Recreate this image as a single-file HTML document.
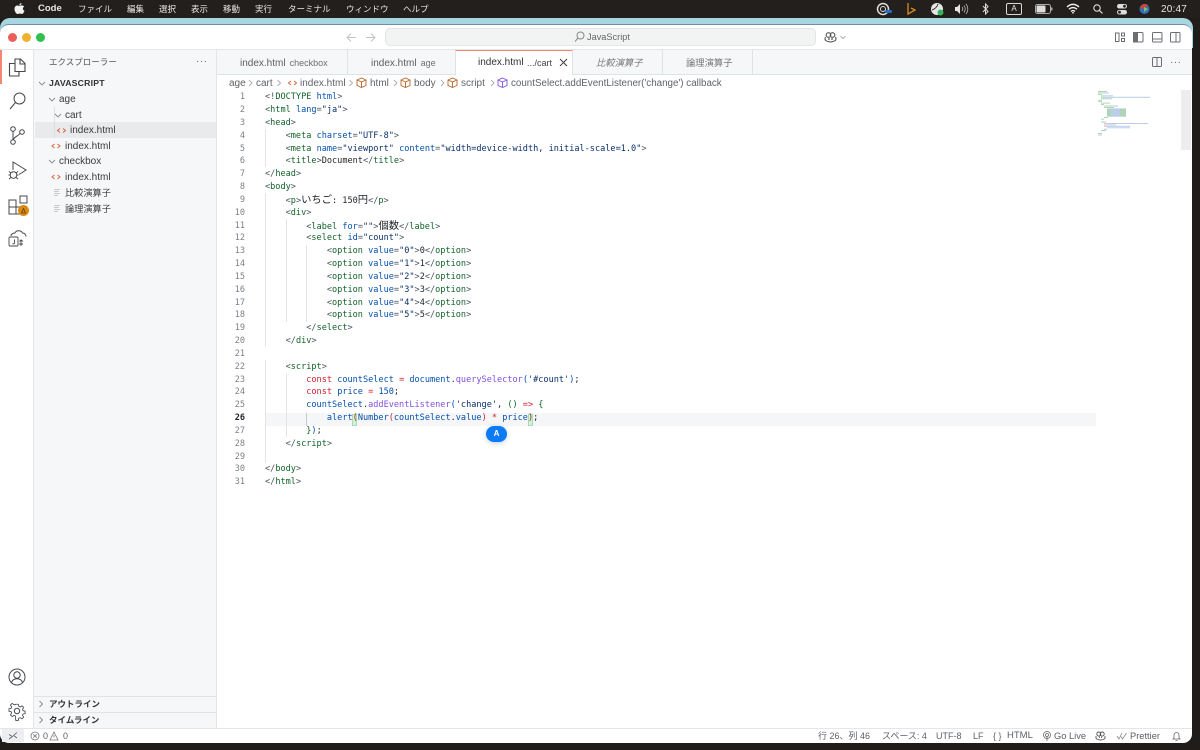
<!DOCTYPE html>
<html lang="ja"><head><meta charset="utf-8"><title>VS Code</title>
<style>
*{box-sizing:border-box}
html,body{margin:0;padding:0;width:1200px;height:750px;overflow:hidden;background:#1f1c1a}
body{position:relative;font-family:"Liberation Sans","Noto Sans CJK JP",sans-serif;color:#3b3b3b}
.a{position:absolute;white-space:pre}
.m{top:2px;height:14px;line-height:14px;color:#e9e7e4;font-size:8.5px}
.s{font-size:10px;line-height:14px;height:14px}
.t{top:56px;font-size:10px;line-height:14px;color:#5e5e5e}
.t small{font-size:9px;color:#6e6e6e;margin-left:4px}
.bc{top:77px;font-size:10px;line-height:13px;color:#5f6368}
.st{top:729px;font-size:9px;line-height:14px;color:#5c6166}
svg{position:absolute;overflow:visible}
#code,#nums{position:absolute;left:0;top:.8px}
#code div{position:absolute;left:265px;height:12.83px;line-height:12.83px;font-family:"DejaVu Sans Mono","Liberation Mono",monospace;font-size:8.57px;white-space:pre;color:#1f2328}
#nums div{position:absolute;left:225px;width:20px;text-align:right;height:12.83px;line-height:12.83px;font-family:"DejaVu Sans Mono","Liberation Mono",monospace;font-size:8.57px;color:#7a828a}
i{font-style:normal}
.g{color:#116329}.p{color:#4a5560}.b{color:#0550ae}.n{color:#0a3069}.k{color:#cf222e}.f{color:#8250df}.j{font-size:10.3px;font-family:"Noto Sans CJK JP",sans-serif;line-height:10px}
.gl{position:absolute;width:1px;background:#e2e4e7}
</style></head><body>
<div class="a" style="left:0;top:18px;width:1193px;height:30px;background:#a8d5e2;border-radius:10px 10px 0 0"></div>
<div class="a" style="left:0;top:24px;width:1192px;height:719px;background:#fff;border-radius:9px;border-top:1px solid #6f8f9b"></div>

<div class="a" style="left:0;top:0;width:1200px;height:18px;background:#221f1c"></div>
<svg style="left:14px;top:3px" width="11" height="12" viewBox="0 0 11 12"><path fill="#f2f2f2" d="M7.500 0c.1 1-.9 2.400-2.200 2.400C5.200 1.200 6.400.1 7.500 0zM5.400 3c.6 0 1.300-.6 2.400-.6.900 0 1.800.5 2.300 1.200-1.800 1-1.500 3.500.4 4.300-.5 1.300-1.500 3.100-2.600 3.100-.8 0-1.100-.5-2.100-.5s-1.400.5-2.100.5C2.300 11 .5 8.500.5 6c0-2.200 1.400-3.500 2.800-3.500.9 0 1.600.5 2.100.5z"/></svg>
<div class="a m" style="left:38px;font-weight:bold;font-size:9.5px">Code</div>
<div class="a m" style="left:78px">ファイル</div><div class="a m" style="left:127px">編集</div><div class="a m" style="left:159px">選択</div><div class="a m" style="left:191px">表示</div><div class="a m" style="left:223px">移動</div><div class="a m" style="left:255px">実行</div><div class="a m" style="left:288px">ターミナル</div><div class="a m" style="left:346px">ウィンドウ</div><div class="a m" style="left:403px">ヘルプ</div>

<!-- menu extras -->
<svg style="left:875px;top:2px" width="18" height="14" viewBox="0 0 18 14"><circle cx="8" cy="7" r="5.500" fill="none" stroke="#ddd" stroke-width="1.500"/><circle cx="8" cy="7" r="2.500" fill="none" stroke="#ddd"/><rect x="10" y="8" width="7" height="3" rx="1.500" fill="#1f6fd0"/></svg>
<svg style="left:906px;top:2px" width="10" height="14" viewBox="0 0 10 14"><path d="M2 1v11l7-4-4-2" fill="none" stroke="#d98a1f" stroke-width="1.300"/></svg>
<svg style="left:930px;top:2px" width="14" height="14" viewBox="0 0 14 14"><circle cx="7" cy="7" r="6" fill="#e6e6e6"/><path d="M2 8c3-1 5-3 6-6" stroke="#333" fill="none"/><circle cx="10.500" cy="10.500" r="3" fill="#32b45a"/></svg>
<svg style="left:954px;top:3px" width="15" height="12" viewBox="0 0 15 12"><path d="M1 4h2l3-3v10L3 8H1z" fill="#e5e5e5"/><path d="M8 4c1 1 1 3 0 4M10 2.500c1.600 2 1.600 5 0 7M12 1c2.400 3 2.400 7 0 10" stroke="#bbb" fill="none" stroke-width=".8"/></svg>
<svg style="left:982px;top:3px" width="7" height="12" viewBox="0 0 7 12"><path d="M1 3l5 5.500L3.500 11V1L6 3.500 1 9" fill="none" stroke="#ddd"/></svg>
<div class="a" style="left:1006px;top:2.500px;width:16px;height:12px;border:1px solid #d8d8d8;border-radius:2px;color:#e8e8e8;font-size:8px;line-height:10px;text-align:center">A</div>
<svg style="left:1035px;top:4px" width="18" height="10" viewBox="0 0 18 10"><rect x=".5" y=".5" width="15" height="9" rx="2" fill="none" stroke="#aaa"/><rect x="1.500" y="1.500" width="9" height="7" rx="1" fill="#ddd"/><rect x="16" y="3.500" width="1.500" height="3" fill="#aaa"/></svg>
<svg style="left:1066px;top:3px" width="14" height="11" viewBox="0 0 14 11"><path d="M1 4c3.500-3.500 8.500-3.500 12 0M3 6.300c2.400-2.300 5.600-2.300 8 0M5 8.400c1.200-1 2.800-1 4 0" fill="none" stroke="#eee" stroke-width="1.400"/><circle cx="7" cy="9.800" r=".9" fill="#eee"/></svg>
<svg style="left:1093px;top:4px" width="10" height="10" viewBox="0 0 10 10"><circle cx="4" cy="4" r="3.200" fill="none" stroke="#ddd" stroke-width="1.100"/><path d="M6.400 6.400L9.500 9.500" stroke="#ddd" stroke-width="1.200"/></svg>
<svg style="left:1116px;top:3px" width="12" height="12" viewBox="0 0 12 12"><rect x="1" y="1" width="10" height="4.500" rx="2.200" fill="#ddd"/><rect x="1" y="7" width="10" height="4.500" rx="2.200" fill="#ddd"/><circle cx="8.500" cy="3.200" r="1.400" fill="#222"/><circle cx="3.500" cy="9.200" r="1.400" fill="#222"/></svg>
<svg style="left:1139px;top:3px" width="11" height="12" viewBox="0 0 11 12"><circle cx="5.500" cy="6" r="5" fill="#2f6fb5"/><path d="M1 5a5 5 0 0 1 8-3L6 6z" fill="#c9463d"/><path d="M5 4l4 2-4 3z" fill="#7cc06a"/></svg>
<div class="a m" style="left:1161px;top:3px;font-size:10px;letter-spacing:.2px">20:47</div>

<!-- title bar -->
<div class="a" style="left:8px;top:33px;width:9px;height:9px;border-radius:50%;background:#ed5f59"></div>
<div class="a" style="left:22px;top:33px;width:9px;height:9px;border-radius:50%;background:#f0b22e"></div>
<div class="a" style="left:36px;top:33px;width:9px;height:9px;border-radius:50%;background:#2fc050"></div>
<svg style="left:346px;top:32px" width="30" height="11" viewBox="0 0 30 11" fill="none" stroke="#c0c3c7"><path d="M10 5.500H1M5 1.500l-4 4 4 4M20 5.500h9M25 1.500l4 4-4 4"/></svg>
<div class="a" style="left:385px;top:28px;width:431px;height:18px;background:#f2f3f3;border:1px solid #e3e4e5;border-radius:5px"></div>
<svg style="left:574px;top:31px" width="11" height="11" viewBox="0 0 11 11" fill="none" stroke="#888"><circle cx="6.500" cy="4.500" r="3.500"/><path d="M4 7L1 10.500"/></svg>
<div class="a" style="left:587px;top:30px;font-size:9.200px;line-height:14px;color:#666">JavaScript</div>
<svg style="left:824px;top:32px" width="23" height="11" viewBox="0 0 23 11" fill="none" stroke="#555" stroke-width="1.100"><circle cx="4.500" cy="3" r="2.300"/><circle cx="8.500" cy="3" r="2.300"/><path d="M1.500 5c-.7 1.500-.5 3 .5 3.700 2.800 1.500 6.200 1.500 9 0 1-.7 1.200-2.200.5-3.700"/><path d="M5 6v2M8 6v2" stroke-width="1.200"/><path d="M16.500 4l2.500 2.500L21.500 4" stroke="#999" stroke-width=".8"/></svg>
<svg style="left:1115px;top:32px" width="66" height="11" viewBox="0 0 66 11" fill="none" stroke="#6b6f74">
<rect x=".5" y="1" width="3.500" height="8.500"/><rect x="6.500" y="1" width="3" height="3"/><rect x="6.500" y="6.500" width="3" height="3"/>
<rect x="18.500" y=".5" width="9.500" height="9.500" rx="1"/><rect x="18.500" y=".5" width="4" height="9.500" fill="#6b6f74"/>
<rect x="37.500" y=".5" width="9.500" height="9.500" rx="1"/><path d="M37.500 7h9.500"/>
<rect x="55.500" y=".5" width="9.500" height="9.500" rx="1"/><path d="M61 .5v9.500"/></svg>

<!-- borders -->
<div class="a" style="left:0;top:49px;width:1192px;height:1px;background:#e3e5e8"></div>

<!-- activity bar -->
<div class="a" style="left:0;top:50px;width:2px;height:34px;background:#f28772"></div>
<div class="a" style="left:33px;top:50px;width:1px;height:678px;background:#e3e5e8"></div>
<svg style="left:8px;top:58px" width="18" height="19" viewBox="0 0 18 19" fill="none" stroke="#44484c" stroke-width="1.100"><path d="M7 1h5.500L17 5.500V13.500H7z" fill="#fff"/><path d="M12 1v5h5"/><path d="M7 5.500H1.500V18H11V13.500"/></svg>
<svg style="left:9px;top:92px" width="17" height="18" viewBox="0 0 17 18" fill="none" stroke="#44484c" stroke-width="1"><circle cx="10.500" cy="6.500" r="5.500"/><path d="M6.500 10.500L1 17"/></svg>
<svg style="left:9px;top:126px" width="16" height="19" viewBox="0 0 16 19" fill="none" stroke="#44484c" stroke-width="1"><circle cx="4" cy="3" r="2.300"/><circle cx="4" cy="16" r="2.300"/><circle cx="13" cy="6" r="2.300"/><path d="M4 5.300v8.400M11 7c-1 3-5 3-6.800 6.500"/></svg>
<svg style="left:8px;top:161px" width="19" height="19" viewBox="0 0 19 19" fill="none" stroke="#44484c" stroke-width="1"><path d="M5 9V1l13 8-7 4.500"/><circle cx="5.500" cy="14" r="3.300"/><path d="M1 10.500l2 1.500M10 10.500l-2 1.500M.5 14h2M8.500 14h2M1 18l2-1.500M10 18l-2-1.500"/></svg>
<svg style="left:8px;top:195px" width="21" height="21" viewBox="0 0 21 21" fill="none" stroke="#44484c" stroke-width="1"><rect x="1" y="5" width="7" height="7"/><rect x="1" y="12" width="7" height="7"/><rect x="8" y="12" width="7" height="7"/><rect x="12" y="1" width="7" height="7"/><circle cx="15.500" cy="15.500" r="5.500" fill="#d88a14" stroke="none"/><path d="M13.500 18l2-4.500 2 4.500z" stroke="#6b3f05" stroke-width=".8"/></svg>
<svg style="left:8px;top:229px" width="19" height="19" viewBox="0 0 19 19" fill="none" stroke="#44484c" stroke-width=".9"><path d="M3 7C3 4.500 6 4 7 4c1-3 6-3 7.500 0 2 0 3.500 1.500 3.500 3.500"/><rect x="1" y="8" width="9" height="9" rx="1"/><path d="M6.500 10.500V14c0 1-1.500 1-2 .5M13 17v-6l-1.500 1.500M13 11l2 1.500M15 15h-4"/></svg>
<svg style="left:8px;top:668px" width="18" height="18" viewBox="0 0 18 18" fill="none" stroke="#44484c" stroke-width="1"><circle cx="9" cy="9" r="8"/><circle cx="9" cy="7" r="3.200"/><path d="M3.500 14.500c1-3 3-3.700 5.500-3.700s4.500.7 5.500 3.700"/></svg>
<svg style="left:8px;top:702px" width="18" height="18" viewBox="0 0 18 18" fill="none" stroke="#44484c" stroke-width="1"><circle cx="9" cy="9" r="2.700"/><path d="M7.500 1h3l.5 2.500 1.700.7 2.100-1.400 2 2-1.400 2.100.7 1.700 2.400.4v2.900l-2.400.5-.7 1.700 1.400 2.100-2 2-2.100-1.400-1.700.7-.5 2.500h-3L7 14.800l-1.700-.7-2.100 1.400-2-2 1.400-2.100-.7-1.700L-.5 9.200V6.300l2.400-.5.700-1.700-1.400-2.100 2-2 2.100 1.400L7 1.700z" transform="translate(1.400 1.400) scale(.85)"/></svg>

<!-- sidebar -->
<div class="a" style="left:34px;top:50px;width:183px;height:678px;background:#f6f7f9;border-right:1px solid #e3e5e8"></div>
<div class="a" style="left:49px;top:55px;font-size:8.5px;line-height:14px;color:#555">エクスプローラー</div>
<div class="a" style="left:196px;top:55px;font-size:10px;line-height:14px;color:#666;letter-spacing:.5px">···</div>
<div class="a" style="left:35px;top:122px;width:181px;height:16px;background:#e9eaec"></div>
<div class="gl" style="left:54px;top:107px;height:31px;background:#dcdee1"></div>
<svg style="left:38px;top:81px" width="8" height="5" fill="none" stroke="#8a8a8a" stroke-width=".9"><path d="M1 1l3 3 3-3"/></svg>
<svg style="left:48px;top:97px" width="8" height="5" fill="none" stroke="#8a8a8a" stroke-width=".9"><path d="M1 1l3 3 3-3"/></svg>
<svg style="left:54px;top:113px" width="8" height="5" fill="none" stroke="#8a8a8a" stroke-width=".9"><path d="M1 1l3 3 3-3"/></svg>
<svg style="left:48px;top:159px" width="8" height="5" fill="none" stroke="#8a8a8a" stroke-width=".9"><path d="M1 1l3 3 3-3"/></svg>
<div class="a s" style="left:49px;top:76px;font-weight:bold;font-size:8.7px;letter-spacing:.2px;color:#333">JAVASCRIPT</div>
<div class="a s" style="left:59px;top:93px">age</div>
<div class="a s" style="left:65px;top:109px">cart</div>
<div class="a s" style="left:70px;top:124px">index.html</div>
<div class="a s" style="left:65px;top:140px">index.html</div>
<div class="a s" style="left:59px;top:155px">checkbox</div>
<div class="a s" style="left:65px;top:171px">index.html</div>
<div class="a s" style="left:65px;top:186px;font-size:9.2px">比較演算子</div>
<div class="a s" style="left:65px;top:202px;font-size:9.2px">論理演算子</div>
<svg style="left:0;top:0" width="1200" height="750" fill="none">
<g stroke="#d9663b" stroke-width="1">
<path d="M60 128.500l-2.500 2 2.500 2M63 128.500l2.500 2-2.500 2"/>
<path d="M54.500 144l-2.500 2 2.500 2M57.500 144l2.500 2-2.500 2"/>
<path d="M54.500 175l-2.500 2 2.500 2M57.500 175l2.500 2-2.500 2"/>
<path d="M230 60.500l-2.500 2 2.500 2M233 60.500l2.500 2-2.500 2"/>
<path d="M360.500 60.500l-2.500 2 2.500 2M363.500 60.500l2.500 2-2.500 2"/>
<path d="M467.500 60.500l-2.500 2 2.500 2M470.500 60.500l2.500 2-2.500 2"/>
<path d="M291 81l-2.500 2 2.500 2M294 81l2.500 2-2.500 2"/>
</g>
<g stroke="#c5c8cc" stroke-width="1"><path d="M54 189.500h6M54 191.500h5M54 193.500h6M54 195.500h4M54 205.500h6M54 207.500h5M54 209.500h6M54 211.500h4"/>
<path d="M586 59.500h6M586 61.500h5M586 63.500h6M586 65.500h4M676 59.500h6M676 61.500h5M676 63.500h6M676 65.500h4"/></g>
<g stroke="#999" stroke-width=".8"><path d="M249 80l3 3-3 3M277.500 80l3 3-3 3M349.500 80l3 3-3 3M394 80l3 3-3 3M441 80l3 3-3 3"/><path d="M491 80l3 3-3 3"/></g>
<g stroke="#b5652a" stroke-width=".9"><path d="M357 80l4.500-2 4.500 2v5.500l-4.500 2-4.500-2zM357 80l4.500 2 4.500-2M361.500 82v5.500"/><path d="M401 80l4.500-2 4.500 2v5.500l-4.500 2-4.500-2zM401 80l4.500 2 4.500-2M405.500 82v5.500"/><path d="M448 80l4.500-2 4.500 2v5.500l-4.500 2-4.500-2zM448 80l4.500 2 4.500-2M452.500 82v5.500"/></g>
<path stroke="#8250df" stroke-width=".9" d="M498 80l4.500-2 4.500 2v5.500l-4.500 2-4.500-2zM498 80l4.500 2 4.500-2M502.500 82v5.500"/>
<g stroke="#8a8a8a" stroke-width=".9"><path d="M39.500 701l3 3-3 3M39.500 717l3 3-3 3"/></g>
</svg>
<div class="a" style="left:34px;top:696px;width:182px;height:1px;background:#e1e3e6"></div>
<div class="a" style="left:34px;top:712px;width:182px;height:1px;background:#e1e3e6"></div>
<div class="a" style="left:49px;top:697px;font-size:8.5px;font-weight:bold;line-height:14px;color:#333">アウトライン</div>
<div class="a" style="left:49px;top:713px;font-size:8.5px;font-weight:bold;line-height:14px;color:#333">タイムライン</div>

<!-- tabs -->
<div class="a" style="left:217px;top:50px;width:975px;height:24.500px;background:#f6f7f9;border-bottom:1px solid #dfe3e8"></div>
<div class="a" style="left:347px;top:50px;width:1px;height:24px;background:#dfe3e8"></div>
<div class="a" style="left:454.500px;top:50px;width:118.500px;height:25px;background:#fff;border-left:1px solid #dfe3e8;border-right:1px solid #dfe3e8;border-top:1px solid #f28772"></div>
<div class="a" style="left:662px;top:50px;width:1px;height:24px;background:#dfe3e8"></div>
<div class="a" style="left:752px;top:50px;width:1px;height:24px;background:#dfe3e8"></div>
<div class="a t" style="left:240px">index.html<small>checkbox</small></div>
<div class="a t" style="left:371px">index.html<small>age</small></div>
<div class="a t" style="left:478px;color:#333">index.html</div>
<div class="a t" style="left:527px;color:#444"><small style="margin:0;color:#444">.../cart</small></div>
<svg style="left:559px;top:58px" width="9" height="9" stroke="#444" fill="none"><path d="M1 1l7 7M8 1L1 8"/></svg>
<div class="a t" style="left:596px;font-style:italic;font-size:9.3px;color:#777">比較演算子</div>
<div class="a t" style="left:686px;font-size:9.3px;color:#777">論理演算子</div>
<svg style="left:1152px;top:57px" width="10" height="10" fill="none" stroke="#6b6f74"><rect x=".5" y=".5" width="9" height="9" rx="1"/><path d="M5 .5v9"/></svg>
<div class="a" style="left:1170px;top:56px;font-size:10px;line-height:14px;color:#666;letter-spacing:.5px">···</div>

<!-- breadcrumbs -->
<div class="a bc" style="left:229px">age</div>
<div class="a bc" style="left:256px">cart</div>
<div class="a bc" style="left:300px">index.html</div>
<div class="a bc" style="left:370px">html</div>
<div class="a bc" style="left:414px">body</div>
<div class="a bc" style="left:461px">script</div>
<div class="a bc" style="left:511px;font-size:9.800px">countSelect.addEventListener('change') callback</div>

<!-- editor -->
<div class="a" style="left:265px;top:413px;width:831px;height:13px;background:#f5f6f7"></div>
<div class="gl" style="left:265px;top:129px;height:38px"></div>
<div class="gl" style="left:265px;top:193px;height:154px"></div>
<div class="gl" style="left:265px;top:360px;height:103px"></div>
<div class="gl" style="left:285.500px;top:219px;height:103px"></div>
<div class="gl" style="left:306px;top:245px;height:77px"></div>
<div class="gl" style="left:285.500px;top:373px;height:64px"></div>
<div class="gl" style="left:306px;top:413px;height:13px;background:#c9cccf"></div>

<div id="nums">
<div style="top:90.500px">1</div><div style="top:103.300px">2</div><div style="top:116.200px">3</div><div style="top:129px">4</div><div style="top:141.800px">5</div><div style="top:154.700px">6</div><div style="top:167.500px">7</div><div style="top:180.300px">8</div><div style="top:193.100px">9</div><div style="top:206px">10</div><div style="top:218.800px">11</div><div style="top:231.600px">12</div><div style="top:244.500px">13</div><div style="top:257.300px">14</div><div style="top:270.100px">15</div><div style="top:283px">16</div><div style="top:295.800px">17</div><div style="top:308.600px">18</div><div style="top:321.500px">19</div><div style="top:334.300px">20</div><div style="top:347.100px">21</div><div style="top:360px">22</div><div style="top:372.800px">23</div><div style="top:385.600px">24</div><div style="top:398.500px">25</div><div style="top:411.300px;color:#1f2328;font-weight:bold">26</div><div style="top:424.100px">27</div><div style="top:437px">28</div><div style="top:449.800px">29</div><div style="top:462.600px">30</div><div style="top:475.500px">31</div>
</div>
<div class="a" style="left:351.500px;top:413.500px;width:5.600px;height:12px;background:#d5efdc;border:1px solid #a9d9b7"></div>
<div class="a" style="left:527.500px;top:413.500px;width:5.600px;height:12px;background:#d5efdc;border:1px solid #a9d9b7"></div>
<div id="code">
<div style="top:90.500px"><i class="p">&lt;!</i><i class="g">DOCTYPE</i> <i class="b">html</i><i class="p">&gt;</i></div>
<div style="top:103.300px"><i class="p">&lt;</i><i class="g">html</i> <i class="b">lang</i><i class="p">=</i><i class="n">"ja"</i><i class="p">&gt;</i></div>
<div style="top:116.200px"><i class="p">&lt;</i><i class="g">head</i><i class="p">&gt;</i></div>
<div style="top:129px">    <i class="p">&lt;</i><i class="g">meta</i> <i class="b">charset</i><i class="p">=</i><i class="n">"UTF-8"</i><i class="p">&gt;</i></div>
<div style="top:141.800px">    <i class="p">&lt;</i><i class="g">meta</i> <i class="b">name</i><i class="p">=</i><i class="n">"viewport"</i> <i class="b">content</i><i class="p">=</i><i class="n">"width=device-width, initial-scale=1.0"</i><i class="p">&gt;</i></div>
<div style="top:154.700px">    <i class="p">&lt;</i><i class="g">title</i><i class="p">&gt;</i>Document<i class="p">&lt;/</i><i class="g">title</i><i class="p">&gt;</i></div>
<div style="top:167.500px"><i class="p">&lt;/</i><i class="g">head</i><i class="p">&gt;</i></div>
<div style="top:180.300px"><i class="p">&lt;</i><i class="g">body</i><i class="p">&gt;</i></div>
<div style="top:193.100px">    <i class="p">&lt;</i><i class="g">p</i><i class="p">&gt;</i><i class="j">いちご</i>: 150<i class="j">円</i><i class="p">&lt;/</i><i class="g">p</i><i class="p">&gt;</i></div>
<div style="top:206px">    <i class="p">&lt;</i><i class="g">div</i><i class="p">&gt;</i></div>
<div style="top:218.800px">        <i class="p">&lt;</i><i class="g">label</i> <i class="b">for</i><i class="p">=</i><i class="n">""</i><i class="p">&gt;</i><i class="j">個数</i><i class="p">&lt;/</i><i class="g">label</i><i class="p">&gt;</i></div>
<div style="top:231.600px">        <i class="p">&lt;</i><i class="g">select</i> <i class="b">id</i><i class="p">=</i><i class="n">"count"</i><i class="p">&gt;</i></div>
<div style="top:244.500px">            <i class="p">&lt;</i><i class="g">option</i> <i class="b">value</i><i class="p">=</i><i class="n">"0"</i><i class="p">&gt;</i>0<i class="p">&lt;/</i><i class="g">option</i><i class="p">&gt;</i></div>
<div style="top:257.300px">            <i class="p">&lt;</i><i class="g">option</i> <i class="b">value</i><i class="p">=</i><i class="n">"1"</i><i class="p">&gt;</i>1<i class="p">&lt;/</i><i class="g">option</i><i class="p">&gt;</i></div>
<div style="top:270.100px">            <i class="p">&lt;</i><i class="g">option</i> <i class="b">value</i><i class="p">=</i><i class="n">"2"</i><i class="p">&gt;</i>2<i class="p">&lt;/</i><i class="g">option</i><i class="p">&gt;</i></div>
<div style="top:283px">            <i class="p">&lt;</i><i class="g">option</i> <i class="b">value</i><i class="p">=</i><i class="n">"3"</i><i class="p">&gt;</i>3<i class="p">&lt;/</i><i class="g">option</i><i class="p">&gt;</i></div>
<div style="top:295.800px">            <i class="p">&lt;</i><i class="g">option</i> <i class="b">value</i><i class="p">=</i><i class="n">"4"</i><i class="p">&gt;</i>4<i class="p">&lt;/</i><i class="g">option</i><i class="p">&gt;</i></div>
<div style="top:308.600px">            <i class="p">&lt;</i><i class="g">option</i> <i class="b">value</i><i class="p">=</i><i class="n">"5"</i><i class="p">&gt;</i>5<i class="p">&lt;/</i><i class="g">option</i><i class="p">&gt;</i></div>
<div style="top:321.500px">        <i class="p">&lt;/</i><i class="g">select</i><i class="p">&gt;</i></div>
<div style="top:334.300px">    <i class="p">&lt;/</i><i class="g">div</i><i class="p">&gt;</i></div>
<div style="top:360px">    <i class="p">&lt;</i><i class="g">script</i><i class="p">&gt;</i></div>
<div style="top:372.800px">        <i class="k">const</i> <i class="b">countSelect</i> <i class="k">=</i> <i class="b">document</i>.<i class="f">querySelector</i><i class="b">(</i><i class="n">'#count'</i><i class="b">)</i>;</div>
<div style="top:385.600px">        <i class="k">const</i> <i class="b">price</i> <i class="k">=</i> <i class="b">150</i>;</div>
<div style="top:398.500px">        <i class="b">countSelect</i>.<i class="f">addEventListener</i><i class="b">(</i><i class="n">'change'</i>, <i class="g">()</i> <i class="k">=&gt;</i> <i class="g">{</i></div>
<div style="top:411.300px">            <i class="b">alert</i><i style="color:#953800">(</i><i class="b">Number</i><i class="k">(</i><i class="b">countSelect</i>.<i class="b">value</i><i class="k">)</i> <i class="k">*</i> <i class="b">price</i><i style="color:#953800">)</i>;</div>
<div style="top:424.100px">        <i class="g">}</i><i class="b">)</i>;</div>
<div style="top:437px">    <i class="p">&lt;/</i><i class="g">script</i><i class="p">&gt;</i></div>
<div style="top:462.600px"><i class="p">&lt;/</i><i class="g">body</i><i class="p">&gt;</i></div>
<div style="top:475.500px"><i class="p">&lt;/</i><i class="g">html</i><i class="p">&gt;</i></div>
</div>
<div class="a" style="left:486px;top:426px;width:21px;height:16px;border-radius:8px;background:#0a7bf5;color:#fff;font-size:8px;font-weight:bold;line-height:16px;text-align:center;box-shadow:0 1px 5px rgba(0,60,140,.25)">A</div>

<!-- minimap -->
<svg style="left:1098px;top:90.500px;filter:blur(.3px)" width="60" height="50" opacity=".7">
<g fill="#8fc29d"><rect x="0" y="0" width="9" height="1"/><rect x="0" y="1.450" width="6" height="1"/><rect x="0" y="2.900" width="4" height="1"/><rect x="3" y="4.350" width="3" height="1"/><rect x="3" y="5.800" width="3" height="1"/><rect x="3" y="7.250" width="11" height="1"/><rect x="0" y="8.700" width="4" height="1"/><rect x="0" y="10.100" width="4" height="1"/><rect x="3" y="11.600" width="9" height="1"/><rect x="3" y="13" width="3" height="1"/><rect x="6" y="14.500" width="14" height="1"/><rect x="6" y="16" width="10" height="1"/>
<rect x="9" y="17.400" width="4" height="8.300"/><rect x="22" y="17.400" width="6" height="8.300"/>
<rect x="6" y="26" width="4" height="1"/><rect x="3" y="27.600" width="3" height="1"/><rect x="3" y="30.500" width="5" height="1"/><rect x="3" y="39" width="5" height="1"/><rect x="0" y="42" width="4" height="1"/><rect x="0" y="43.500" width="4" height="1"/></g>
<g fill="#9db8e0"><rect x="6" y="1.450" width="5" height="1"/><rect x="6" y="4.350" width="9" height="1"/><rect x="6" y="5.800" width="46" height="1"/><rect x="13" y="17.400" width="9" height="8.300"/><rect x="10" y="32" width="40" height="1"/><rect x="10" y="33.400" width="8" height="1"/><rect x="6" y="34.800" width="26" height="1"/><rect x="9" y="36.300" width="23" height="1"/><rect x="6" y="37.700" width="3" height="1"/></g>
<g fill="#eda8a8"><rect x="6" y="32" width="4" height="1"/><rect x="6" y="33.400" width="4" height="1"/></g>
</svg>
<div class="a" style="left:1181px;top:90px;width:10px;height:60px;background:#ededef"></div>

<!-- status bar -->
<div class="a" style="left:0;top:727.500px;width:1192px;height:1px;background:#e3e5e8"></div>
<div class="a" style="left:2px;top:729px;width:22px;height:13px;background:#eceef1"></div>
<svg style="left:8px;top:732px" width="10" height="8" fill="none" stroke="#5a5f64" stroke-width=".8"><path d="M1 7l3.500-2.500L1 2.500M9 .5L5.500 3.500 9 6"/></svg>
<svg style="left:30px;top:731px" width="30" height="10" fill="none" stroke="#777" stroke-width=".8"><circle cx="5" cy="5" r="4"/><path d="M3.300 3.300l3.400 3.400M6.700 3.300L3.300 6.700"/><path d="M24 1l4 8h-8zM24 4v2.500"/></svg>
<div class="a st" style="left:43px">0</div><div class="a st" style="left:63px">0</div>
<div class="a st" style="left:818px">行 26、列 46</div>
<div class="a st" style="left:882px">スペース: 4</div>
<div class="a st" style="left:936px">UTF-8</div>
<div class="a st" style="left:973px">LF</div>
<div class="a st" style="left:993px">{ }</div>
<div class="a st" style="left:1007px;font-size:9.500px">HTML</div>
<svg style="left:1042px;top:731px" width="10" height="10" fill="none" stroke="#666" stroke-width=".8"><circle cx="5" cy="4" r="3.500"/><circle cx="5" cy="4" r="1.500"/><path d="M5 5.500V10"/></svg>
<div class="a st" style="left:1054px;font-size:9.300px">Go Live</div>
<svg style="left:1095px;top:731px" width="11" height="10" fill="none" stroke="#555" stroke-width=".9"><circle cx="3.800" cy="3" r="2"/><circle cx="7.200" cy="3" r="2"/><path d="M1.200 5c-.5 1.300-.3 2.400.6 3 2.400 1.300 5 1.300 7.400 0 .9-.6 1.100-1.700.6-3"/><path d="M4.300 5.500v1.500M6.700 5.500v1.500"/></svg>
<svg style="left:1116px;top:732px" width="12" height="8" fill="none" stroke="#888" stroke-width=".8"><path d="M1 4l2 3 3-6M5 4.500L6.500 7l4-6"/></svg>
<div class="a st" style="left:1130px;font-size:9.300px">Prettier</div>
<svg style="left:1172px;top:731px" width="9" height="10" fill="none" stroke="#666" stroke-width=".8"><path d="M2 7V4a2.500 2.500 0 0 1 5 0v3l1 1H1zM3.500 9.500h2"/></svg>
</body></html>
